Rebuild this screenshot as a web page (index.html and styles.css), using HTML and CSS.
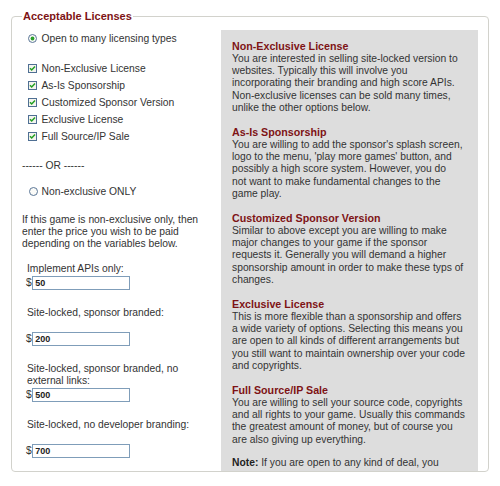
FILE: index.html
```html
<!DOCTYPE html>
<html lang="en-US">
  <head>
    <title>Acceptable Licenses</title>
    <meta charset="utf-8" />
    <link rel="stylesheet" href="styles.css">
  </head>
  <body>
    <fieldset class="licenses">
      <legend>Acceptable Licenses</legend>
      <div class="cols">
        <div class="options">
          <label class="choice">
            <svg class="mark" width="9" height="9" viewBox="0 0 9 9"><circle cx="4.5" cy="4.5" r="4" fill="#fbfbf8" stroke="#5a7697"/><circle cx="4.5" cy="4.5" r="1.9" fill="#2b9f2b"/></svg>
            Open to many licensing types
          </label>
          <div class="checks">
            <label class="choice">
              <svg class="mark" width="9" height="9" viewBox="0 0 9 9"><rect x=".5" y=".5" width="8" height="8" fill="#f4f4ef" stroke="#4f6f93"/><path d="M2 4.2l1.7 1.8 3.3-3.5" fill="none" stroke="#23a023" stroke-width="1.5"/></svg>
              Non-Exclusive License
            </label>
            <label class="choice">
              <svg class="mark" width="9" height="9" viewBox="0 0 9 9"><rect x=".5" y=".5" width="8" height="8" fill="#f4f4ef" stroke="#4f6f93"/><path d="M2 4.2l1.7 1.8 3.3-3.5" fill="none" stroke="#23a023" stroke-width="1.5"/></svg>
              As-Is Sponsorship
            </label>
            <label class="choice">
              <svg class="mark" width="9" height="9" viewBox="0 0 9 9"><rect x=".5" y=".5" width="8" height="8" fill="#f4f4ef" stroke="#4f6f93"/><path d="M2 4.2l1.7 1.8 3.3-3.5" fill="none" stroke="#23a023" stroke-width="1.5"/></svg>
              Customized Sponsor Version
            </label>
            <label class="choice">
              <svg class="mark" width="9" height="9" viewBox="0 0 9 9"><rect x=".5" y=".5" width="8" height="8" fill="#f4f4ef" stroke="#4f6f93"/><path d="M2 4.2l1.7 1.8 3.3-3.5" fill="none" stroke="#23a023" stroke-width="1.5"/></svg>
              Exclusive License
            </label>
            <label class="choice">
              <svg class="mark" width="9" height="9" viewBox="0 0 9 9"><rect x=".5" y=".5" width="8" height="8" fill="#f4f4ef" stroke="#4f6f93"/><path d="M2 4.2l1.7 1.8 3.3-3.5" fill="none" stroke="#23a023" stroke-width="1.5"/></svg>
              Full Source/IP Sale
            </label>
          </div>
          <p class="or">------ OR ------</p>
          <label class="choice only">
            <svg class="mark" width="9" height="9" viewBox="0 0 9 9"><circle cx="4.5" cy="4.5" r="4" fill="#fbfbf8" stroke="#5a7697"/></svg>
            Non-exclusive ONLY
          </label>
          <p class="intro">
            If this game is non-exclusive only, then<br />
            enter the price you wish to be paid<br />
            depending on the variables below.
          </p>
          <div class="price first">
            <p class="ask">Implement APIs only:</p>
            <div class="amount">$<input class="cost" type="text" value="50" /></div>
          </div>
          <div class="price gap">
            <p class="ask">Site-locked, sponsor branded:</p>
            <div class="amount">$<input class="cost" type="text" value="200" /></div>
          </div>
          <div class="price">
            <p class="ask">Site-locked, sponsor branded, no<br />external links:</p>
            <div class="amount">$<input class="cost" type="text" value="500" /></div>
          </div>
          <div class="price gap">
            <p class="ask">Site-locked, no developer branding:</p>
            <div class="amount">$<input class="cost" type="text" value="700" /></div>
          </div>
        </div>
        <div class="info">
          <h3>Non-Exclusive License</h3>
          <p>
            You are interested in selling site-locked version to<br />
            websites. Typically this will involve you<br />
            incorporating their branding and high score APIs.<br />
            Non-exclusive licenses can be sold many times,<br />
            unlike the other options below.
          </p>
          <h3>As-Is Sponsorship</h3>
          <p>
            You are willing to add the sponsor's splash screen,<br />
            logo to the menu, 'play more games' button, and<br />
            possibly a high score system. However, you do<br />
            not want to make fundamental changes to the<br />
            game play.
          </p>
          <h3>Customized Sponsor Version</h3>
          <p>
            Similar to above except you are willing to make<br />
            major changes to your game if the sponsor<br />
            requests it. Generally you will demand a higher<br />
            sponsorship amount in order to make these typs of<br />
            changes.
          </p>
          <h3>Exclusive License</h3>
          <p>
            This is more flexible than a sponsorship and offers<br />
            a wide variety of options. Selecting this means you<br />
            are open to all kinds of different arrangements but<br />
            you still want to maintain ownership over your code<br />
            and copyrights.
          </p>
          <h3>Full Source/IP Sale</h3>
          <p>
            You are willing to sell your source code, copyrights<br />
            and all rights to your game. Usually this commands<br />
            the greatest amount of money, but of course you<br />
            are also giving up everything.
          </p>
          <p>
            <b>Note:</b> If you are open to any kind of deal, you<br />
            should select all the options above.
          </p>
        </div>
      </div>
    </fieldset>
  </body>
</html>
```

FILE: styles.css
```css
* {
  box-sizing: border-box;
}

body {
  margin: 0;
  background-color: #ffffff;
  color: #333333;
  font-family: "Liberation Sans", Arial, sans-serif;
  font-size: 10.3px;
}

p {
  margin: 0;
}

.licenses {
  margin: 9px 11px 0 11px;
  padding: 7px 10px 0 10px;
  border: 1px solid #d2d2cc;
  border-radius: 4px;
  min-width: 0;
}

.licenses legend {
  padding: 0 1px;
  font-size: 11px;
  font-weight: bold;
  line-height: 14px;
  color: #7d1315;
}

.cols {
  display: flex;
}

.options {
  width: 199px;
  flex: none;
}

.choice {
  display: flex;
  align-items: center;
  height: 17px;
  padding-left: 6px;
  white-space: nowrap;
}

.choice .mark {
  flex: none;
  margin-right: 4.5px;
}

.checks {
  margin-top: 13px;
}

.or {
  margin-top: 15px;
  line-height: 12px;
}

.only {
  margin-top: 11px;
  padding-left: 7px;
}

.only .mark {
  margin-right: 3.5px;
}

.intro {
  margin-top: 14px;
  line-height: 12px;
  white-space: nowrap;
}

.price {
  margin-top: 17px;
}

.price.first {
  margin-top: 12.5px;
}

.ask {
  padding-left: 5px;
  line-height: 12px;
  white-space: nowrap;
}

.amount {
  display: flex;
  align-items: center;
  height: 14px;
  margin-top: 1px;
  padding-left: 4px;
}

.price.gap .amount {
  margin-top: 13px;
}

.cost {
  width: 98px;
  height: 14px;
  margin: 0 0 0 0.5px;
  padding: 0 2px;
  border: 1px solid #7f9db9;
  background-color: #ffffff;
  font-family: "Liberation Sans", Arial, sans-serif;
  font-size: 9px;
  font-weight: bold;
  color: #222222;
}

.info {
  width: 257px;
  height: 441px;
  flex: none;
  overflow: hidden;
  padding: 9.5px 0 0 11px;
  background-color: #dddddd;
  white-space: nowrap;
}

.info h3 {
  margin: 0;
  font-size: 10.7px;
  line-height: 13.5px;
  color: #7d1315;
}

.info p {
  margin-bottom: 11.5px;
  line-height: 12.2px;
}

.info b {
  color: #222222;
}
```
